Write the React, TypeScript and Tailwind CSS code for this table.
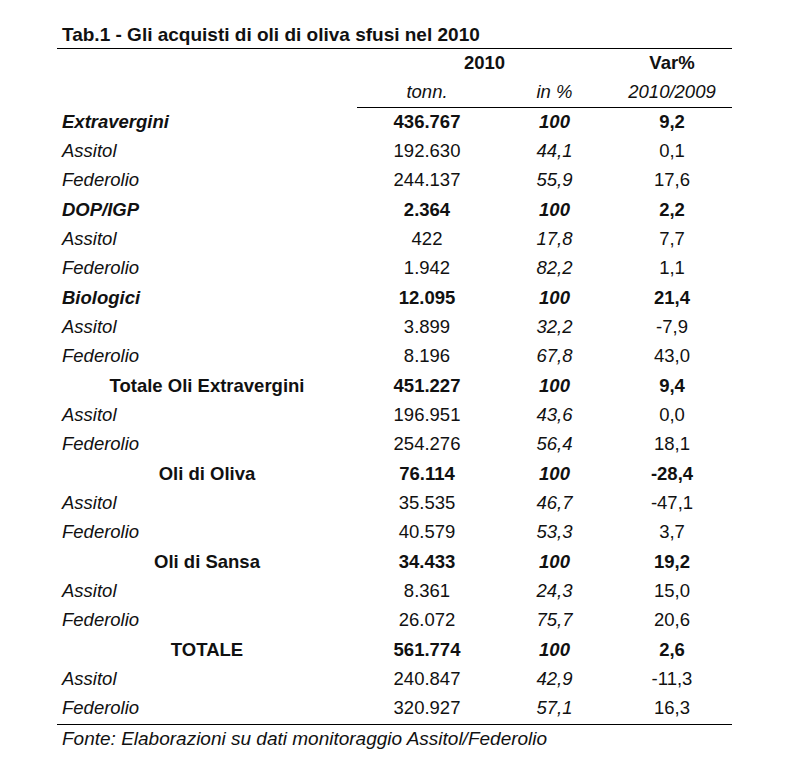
import React from "react";

type Row = { label: string; kind: "sec" | "tot" | "sub"; a: string; b: string; c: string };

const rows: Row[] = [
  { label: "Extravergini", kind: "sec", a: "436.767", b: "100", c: "9,2" },
  { label: "Assitol", kind: "sub", a: "192.630", b: "44,1", c: "0,1" },
  { label: "Federolio", kind: "sub", a: "244.137", b: "55,9", c: "17,6" },
  { label: "DOP/IGP", kind: "sec", a: "2.364", b: "100", c: "2,2" },
  { label: "Assitol", kind: "sub", a: "422", b: "17,8", c: "7,7" },
  { label: "Federolio", kind: "sub", a: "1.942", b: "82,2", c: "1,1" },
  { label: "Biologici", kind: "sec", a: "12.095", b: "100", c: "21,4" },
  { label: "Assitol", kind: "sub", a: "3.899", b: "32,2", c: "-7,9" },
  { label: "Federolio", kind: "sub", a: "8.196", b: "67,8", c: "43,0" },
  { label: "Totale Oli Extravergini", kind: "tot", a: "451.227", b: "100", c: "9,4" },
  { label: "Assitol", kind: "sub", a: "196.951", b: "43,6", c: "0,0" },
  { label: "Federolio", kind: "sub", a: "254.276", b: "56,4", c: "18,1" },
  { label: "Oli di Oliva", kind: "tot", a: "76.114", b: "100", c: "-28,4" },
  { label: "Assitol", kind: "sub", a: "35.535", b: "46,7", c: "-47,1" },
  { label: "Federolio", kind: "sub", a: "40.579", b: "53,3", c: "3,7" },
  { label: "Oli di Sansa", kind: "tot", a: "34.433", b: "100", c: "19,2" },
  { label: "Assitol", kind: "sub", a: "8.361", b: "24,3", c: "15,0" },
  { label: "Federolio", kind: "sub", a: "26.072", b: "75,7", c: "20,6" },
  { label: "TOTALE", kind: "tot", a: "561.774", b: "100", c: "2,6" },
  { label: "Assitol", kind: "sub", a: "240.847", b: "42,9", c: "-11,3" },
  { label: "Federolio", kind: "sub", a: "320.927", b: "57,1", c: "16,3" },
];

export default function App() {
  return (
    <div
      className="w-[801px] h-[771px] bg-white text-[#111] overflow-hidden"
      style={{ fontFamily: '"Liberation Sans", Arial, sans-serif' }}
    >
      <div className="ml-[57px] w-[675px] pt-[24px]">
        <div className="pl-[5px] pb-[2px] border-b border-black text-[19px] leading-[22px] font-bold">
          Tab.1 - Gli acquisti di oli di oliva sfusi nel 2010
        </div>
        <div className="grid grid-cols-[300px_140px_115px_120px] auto-rows-[29.33px] text-[18.5px] leading-[28px]">
          <div />
          <div className="col-span-2 text-center font-bold">2010</div>
          <div className="text-center font-bold">Var%</div>
          <div />
          <div className="text-center italic border-b border-black">tonn.</div>
          <div className="text-center italic border-b border-black">in %</div>
          <div className="text-center italic border-b border-black">2010/2009</div>
          {rows.map((r, i) => {
            const bold = r.kind !== "sub";
            return (
              <React.Fragment key={i}>
                <div
                  className={
                    r.kind === "sec"
                      ? "pl-[5px] font-bold italic"
                      : r.kind === "tot"
                      ? "text-center font-bold"
                      : "pl-[5px] italic"
                  }
                >
                  {r.label}
                </div>
                <div className={bold ? "text-center font-bold" : "text-center"}>{r.a}</div>
                <div className={bold ? "text-center font-bold italic" : "text-center italic"}>{r.b}</div>
                <div className={bold ? "text-center font-bold" : "text-center"}>{r.c}</div>
              </React.Fragment>
            );
          })}
        </div>
        <div className="border-t border-black pl-[5px] italic text-[19px] leading-[28px]">
          Fonte: Elaborazioni su dati monitoraggio Assitol/Federolio
        </div>
      </div>
    </div>
  );
}
